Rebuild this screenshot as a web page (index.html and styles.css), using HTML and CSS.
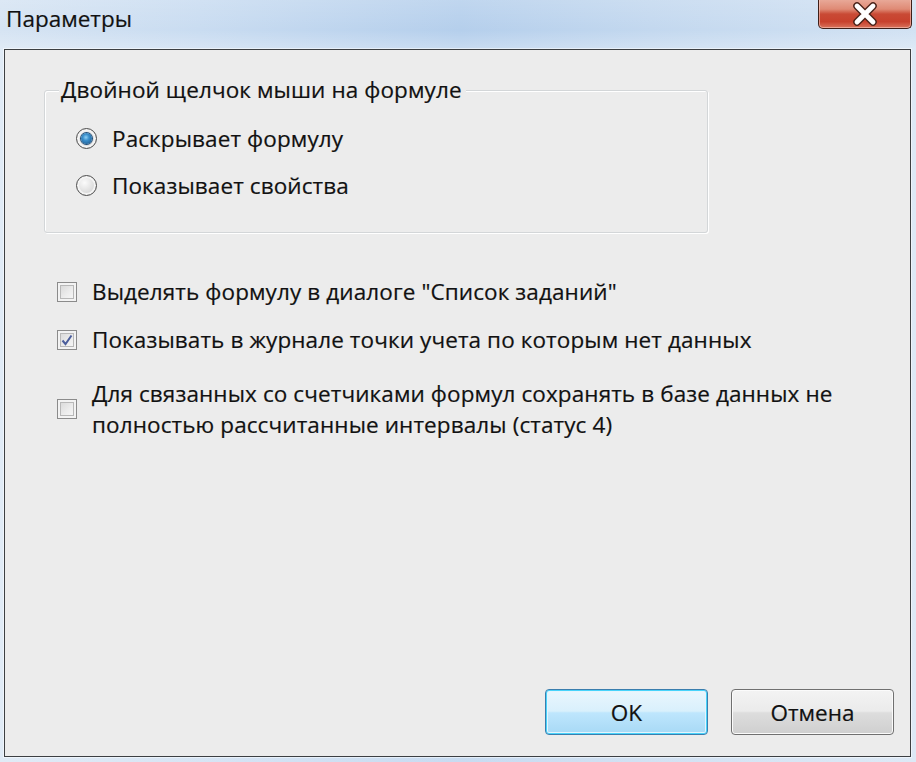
FILE: index.html
```html
<!DOCTYPE html>
<html lang="ru">

<head>
    <meta charset="UTF-8">
    <meta name="viewport" content="width=device-width, initial-scale=1.0">
    <title>Параметры</title>
    <link rel="stylesheet" href="styles.css">
</head>

<body>
    <div class="window">
        <div class="titlebar">
            <span class="title">Параметры</span>
            <button class="close" title="Закрыть">
                <svg width="34" height="24" viewBox="0 0 34 24">
                    <path d="M9 4 L25 20 M25 4 L9 20" stroke="#4a2219" stroke-width="7.5" stroke-linecap="round" />
                    <path d="M9 4 L25 20 M25 4 L9 20" stroke="#fff" stroke-width="4.8" stroke-linecap="round" />
                </svg>
            </button>
        </div>

        <div class="client">
            <fieldset class="group">
                <legend>Двойной щелчок мыши на формуле</legend>
                <label class="option">
                    <span class="radio checked"></span>
                    Раскрывает формулу
                </label>
                <label class="option">
                    <span class="radio"></span>
                    Показывает свойства
                </label>
            </fieldset>

            <div class="checks">
                <label class="check">
                    <span class="box"></span>
                    <span>Выделять формулу в диалоге "Список заданий"</span>
                </label>
                <label class="check">
                    <span class="box checked">
                        <svg width="14" height="14" viewBox="0 0 14 14">
                            <path d="M2.5 7.5 L5.5 11 L11.5 2.5" fill="none" stroke="#4b5e9c" stroke-width="2" />
                        </svg>
                    </span>
                    <span>Показывать в журнале точки учета по которым нет данных</span>
                </label>
                <label class="check multi">
                    <span class="box"></span>
                    <span>Для связанных со счетчиками формул сохранять в базе данных не полностью рассчитанные интервалы (статус 4)</span>
                </label>
            </div>

            <div class="buttons">
                <button class="btn default">OK</button>
                <button class="btn">Отмена</button>
            </div>
        </div>
    </div>
</body>

</html>
```

FILE: styles.css
```css
* {
    margin: 0;
    padding: 0;
    box-sizing: border-box;
}

body {
    font-family: "Open Sans", "Noto Sans", sans-serif;
    font-size: 22.5px;
    letter-spacing: 0.1px;
    color: #111;
    -webkit-text-stroke: 0.2px #111;
    background: #c8dbf0;
}

.window {
    width: 916px;
    height: 762px;
    display: flex;
    flex-direction: column;
    background:
        linear-gradient(180deg, rgba(255, 255, 255, 0.15) 0, rgba(255, 255, 255, 0) 30px, rgba(255, 255, 255, 0.25) 49px),
        linear-gradient(90deg, #d6e4f3 0, #c9dcf1 200px, #b5cfec 460px, #c3d8ef 650px, #d2e2f3 916px);
}

.titlebar {
    height: 49px;
    display: flex;
    justify-content: space-between;
    align-items: flex-start;
}

.title {
    padding: 5px 0 0 6px;
    line-height: 28px;
    letter-spacing: 0;
}

.close {
    width: 94px;
    height: 30px;
    margin: -1px 4px 0 0;
    border: 1px solid #3f1f19;
    border-top: none;
    border-radius: 0 0 5px 5px;
    background: linear-gradient(180deg, #e9ab9b 0, #df8a75 35%, #c94a35 52%, #c8412d 78%, #d9735c 100%);
    box-shadow: inset 0 0 0 1px rgba(255, 220, 210, 0.5);
    display: flex;
    align-items: center;
    justify-content: center;
}

.client {
    flex: 1;
    margin: 0 5px 5px 4px;
    border: 1px solid #3c3f42;
    box-shadow: 0 0 0 1px rgba(255, 255, 255, 0.5);
    background: #ececec;
    display: flex;
    flex-direction: column;
}

.group {
    width: 664px;
    margin: 28px 0 0 39px;
    padding: 0 0 35px 0;
    border: 1px solid #d3d6d8;
    border-radius: 3px;
    box-shadow: 1px 1px 0 #fff, inset 1px 1px 0 #fff;
}

.group legend {
    margin-left: 14px;
    padding: 0 4px 0 2px;
    line-height: 24px;
    background: #ececec;
}

.option {
    display: flex;
    align-items: center;
    gap: 15px;
    height: 24px;
    margin: 24px 0 0 31px;
}

.option + .option {
    margin-top: 23px;
}

.radio {
    width: 21px;
    height: 21px;
    border-radius: 50%;
    border: 1px solid #4d4d4d;
    background: radial-gradient(circle at 40% 35%, #fbfbfb 0, #dcdcdc 60%, #c8c8c8 100%);
    box-shadow: inset 0 0 0 2px #f4f4f4;
    display: flex;
    align-items: center;
    justify-content: center;
}

.radio.checked::after {
    content: "";
    width: 11px;
    height: 11px;
    border-radius: 50%;
    background: radial-gradient(circle at 45% 40%, #8fd0f5 0, #3a8fcb 35%, #1a4f83 100%);
    box-shadow: 0 0 0 1px #1f4d78;
}

.checks {
    margin: 47px 0 0 52px;
}

.check {
    display: flex;
    align-items: center;
    gap: 15px;
    line-height: 24px;
}

.check + .check {
    margin-top: 24px;
}

.check.multi {
    margin-top: 26px;
    line-height: 31px;
    max-width: 800px;
}

.box {
    flex: none;
    width: 20px;
    height: 20px;
    border: 1px solid #8b8b8b;
    background: linear-gradient(135deg, #d4d4d4 0, #eeeeee 60%, #fafafa 100%);
    box-shadow: inset 0 0 0 2px #f3f3f3, inset 0 0 0 3px #b8b8b8;
    display: flex;
    align-items: center;
    justify-content: center;
}

.buttons {
    margin-top: auto;
    padding: 0 16px 21px 0;
    display: flex;
    justify-content: flex-end;
    gap: 23px;
}

.btn {
    width: 163px;
    height: 46px;
    font: inherit;
    color: inherit;
    border: 1px solid #707070;
    border-radius: 4px;
    background: linear-gradient(180deg, #f3f3f3 0, #ebebeb 48%, #dddddd 52%, #cfcfcf 100%);
    box-shadow: inset 0 0 0 1px #fbfbfb;
}

.btn.default {
    border-color: #3a7eae;
    background: linear-gradient(180deg, #eaf6fd 0, #d9f0fc 48%, #bee6fd 52%, #a7d9f5 100%);
    box-shadow: inset 0 0 0 1px #48d3fb, inset 0 0 0 2px #e5f4fc;
}
```
